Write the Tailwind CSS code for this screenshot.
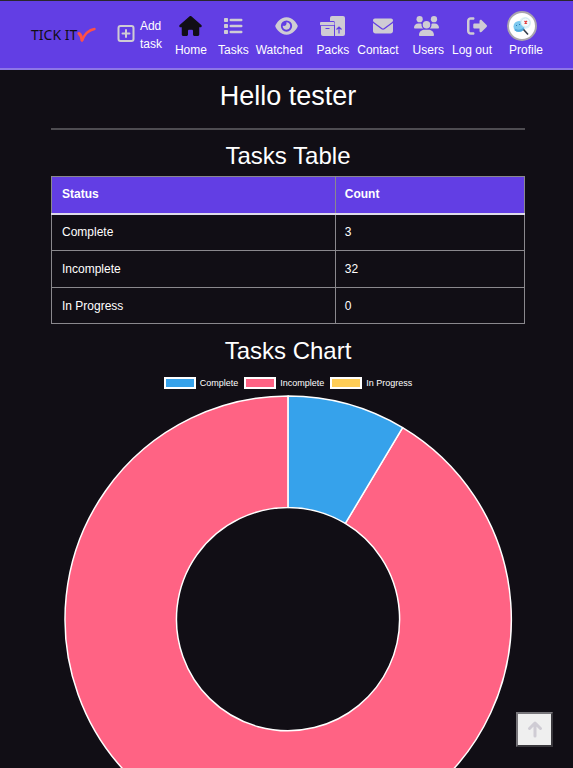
<!DOCTYPE html>
<html lang="en">
<head>
<meta charset="utf-8">
<meta name="viewport" content="width=device-width, initial-scale=1">
<title>Tick It</title>
<script src="https://cdn.jsdelivr.net/npm/@tailwindcss/browser@4"></script>
</head>
<body class="bg-[#110e15] font-['Liberation_Sans',Arial,sans-serif] text-xs text-white">
<header class="border-t border-[#29272c] bg-[#623ee4]">
  <nav class="flex h-[69px] items-center border-b-2 border-[#8d76e6] pt-px pr-[28px] pl-[31px]" aria-label="Main">
    <a href="#" class="flex items-center font-['Noto_Sans',sans-serif] text-[14px] leading-5 text-[#110e15]">TICK IT
      <svg class="h-4 w-5" viewBox="0 0 20 16" fill="none" stroke="#ff5146" stroke-linecap="round" stroke-linejoin="round" aria-hidden="true"><path d="M2 6.500Q4.500 8.500 5 13" stroke-width="3"/><path d="M5 13.500Q9 3.500 17.500 2" stroke-width="2.400"/></svg>
    </a>
    <a href="#" class="mr-[11px] ml-auto flex items-center gap-1">
      <svg class="size-5" viewBox="0 0 20 20" fill="none" stroke="#cfccd4" stroke-width="2" stroke-linecap="round" aria-hidden="true"><rect x="2.500" y="1" width="15" height="15" rx="2"/><path d="M10 5v7M6.500 8.500h7"/></svg>
      <span class="w-6 leading-[18px]">Add task</span>
    </a>
    <ul class="flex items-end leading-[18px] whitespace-nowrap">
      <li class="mr-[11px]"><a href="#" class="flex flex-col items-center gap-[5px]">
        <svg class="h-5 w-[23px]" viewBox="0 0 576 512" fill="#110e15" aria-hidden="true"><path d="M575.8 255.500c0 18-15 32.100-32 32.100h-32l.7 160.200c0 2.700-.2 5.400-.5 8.100V472c0 22.100-17.900 40-40 40H392c-22.100 0-40-17.900-40-40V384c0-17.700-14.300-32-32-32H256c-17.700 0-32 14.300-32 32v88c0 22.100-17.900 40-40 40H104c-22.100 0-40-17.900-40-40V287.600H32c-18 0-32-14-32-32.100c0-9 3-17 10-24L266.400 8c7-7 15-8 22-8s15 2 21 7L564.800 231.500c8 7 12 15 11 24z"/></svg>
        <span>Home</span></a></li>
      <li class="mr-[7px]"><a href="#" class="flex flex-col items-center gap-[5px]">
        <svg class="size-5" viewBox="0 0 20 20" fill="#cfccd4" aria-hidden="true"><rect x="1" y="2" width="4" height="4" rx=".8"/><rect x="1" y="8" width="4" height="4" rx=".8"/><rect x="1" y="14" width="4" height="4" rx=".8"/><rect x="6.500" y="2.800" width="13" height="2.400" rx="1.200"/><rect x="6.500" y="8.800" width="13" height="2.400" rx="1.200"/><rect x="6.500" y="14.800" width="13" height="2.400" rx="1.200"/></svg>
        <span>Tasks</span></a></li>
      <li class="mr-[14px]"><a href="#" class="flex flex-col items-center gap-[5px]">
        <svg class="ml-[15px] h-5 w-[23px]" viewBox="0 0 576 512" fill="#cfccd4" aria-hidden="true"><path d="M288 32c-80.800 0-145.500 36.800-192.600 80.600C48.600 156 17.300 208 2.500 243.700c-3.300 7.900-3.300 16.700 0 24.600C17.300 304 48.600 356 95.400 399.400C142.500 443.200 207.200 480 288 480s145.500-36.800 192.600-80.600c46.800-43.500 78.100-95.400 93-131.100c3.300-7.900 3.300-16.700 0-24.600c-14.900-35.700-46.200-87.700-93-131.100C433.500 68.800 368.800 32 288 32zM144 256a144 144 0 1 1 288 0 144 144 0 1 1 -288 0zm144-64c0 35.300-28.700 64-64 64c-7.100 0-13.900-1.200-20.300-3.300c-5.500-1.800-11.900 1.600-11.700 7.400c.3 6.900 1.300 13.800 3.200 20.700c13.700 51.200 66.400 81.600 117.600 67.900s81.600-66.400 67.900-117.600c-11.100-41.500-47.800-69.400-88.600-71.100c-5.800-.2-9.200 6.100-7.400 11.700c2.100 6.400 3.300 13.200 3.300 20.300z"/></svg>
        <span>Watched</span></a></li>
      <li class="mr-[8px]"><a href="#" class="flex flex-col items-center gap-[5px]">
        <svg class="h-5 w-[25px]" viewBox="0 0 25 20" aria-hidden="true"><path fill="#cfccd4" d="M12 0h11a2 2 0 0 1 2 2v16a2 2 0 0 1-2 2h-8V6.500a1.500 1.500 0 0 0-1.500-1.500H10V2a2 2 0 0 1 2-2zM1 6h12.500a1 1 0 0 1 1 1v1.500a.7.700 0 0 1-.7.700H.7a.7.700 0 0 1-.7-.7V7a1 1 0 0 1 1-1zM1 10h13v10H3a2 2 0 0 1-2-2z"/><path d="M5.500 12.500h4M19 17.500v-6M16.500 13.500 19 11l2.500 2.500" fill="none" stroke="#623ee4" stroke-width="1.200"/></svg>
        <span>Packs</span></a></li>
      <li class="mr-[14px]"><a href="#" class="flex flex-col items-center gap-[5px]">
        <svg class="ml-[11px] size-5" viewBox="0 0 512 512" fill="#cfccd4" aria-hidden="true"><path d="M48 64C21.500 64 0 85.500 0 112c0 15.100 7.100 29.300 19.200 38.400L236.800 313.600c11.400 8.500 27 8.500 38.400 0L492.800 150.400c12.100-9.100 19.200-23.300 19.200-38.400c0-26.500-21.500-48-48-48H48zM0 176V384c0 35.300 28.700 64 64 64H448c35.300 0 64-28.700 64-64V176L294.400 339.200c-22.800 17.100-54 17.100-76.800 0L0 176z"/></svg>
        <span>Contact</span></a></li>
      <li class="mr-[8px]"><a href="#" class="flex flex-col items-center gap-[5px]">
        <svg class="mr-[3px] h-5 w-[25px]" viewBox="0 0 640 512" fill="#cfccd4" aria-hidden="true"><circle cx="144" cy="80" r="80"/><circle cx="512" cy="80" r="80"/><path d="M0 298.700C0 239.800 47.800 192 106.700 192h42.700c15.900 0 31 3.500 44.600 9.700c-1.300 7.200-1.900 14.700-1.900 22.300c0 38.200 16.800 72.500 43.300 96H21.300C9.600 320 0 310.400 0 298.700zM405.300 320c26.600-23.500 43.300-57.800 43.300-96c0-7.600-.7-15-1.900-22.300c13.600-6.300 28.700-9.700 44.600-9.700h42.700C592.200 192 640 239.800 640 298.700c0 11.800-9.600 21.300-21.300 21.300z"/><path stroke="#623ee4" stroke-width="24" paint-order="stroke" d="M224 224a96 96 0 1 1 192 0a96 96 0 1 1-192 0zM128 485.300C128 411.700 187.700 352 261.300 352h117.400C452.300 352 512 411.700 512 485.300c0 14.700-11.900 26.700-26.700 26.700H154.700c-14.700 0-26.700-11.900-26.700-26.700z"/></svg>
        <span>Users</span></a></li>
      <li class="mr-[15px]"><a href="#" class="flex flex-col items-center gap-[5px]">
        <svg class="ml-[11px] size-5" viewBox="0 0 512 512" fill="#cfccd4" aria-hidden="true"><path d="M377.900 105.900L500.700 228.700c7.200 7.200 11.300 17.100 11.300 27.300s-4.100 20.100-11.300 27.300L377.900 406.100c-6.400 6.400-15 9.900-24 9.900c-18.700 0-33.900-15.200-33.900-33.900l0-62.100-128 0c-17.700 0-32-14.300-32-32l0-64c0-17.700 14.300-32 32-32l128 0 0-62.100c0-18.700 15.200-33.900 33.900-33.900c9 0 17.600 3.600 24 9.900zM160 96L96 96c-17.700 0-32 14.300-32 32l0 256c0 17.700 14.300 32 32 32l64 0c17.700 0 32 14.300 32 32s-14.300 32-32 32l-64 0c-53 0-96-43-96-96L0 128C0 75 43 32 96 32l64 0c17.700 0 32 14.300 32 32s-14.300 32-32 32z"/></svg>
        <span>Log out</span></a></li>
      <li><a href="#" class="flex flex-col items-center">
        <svg class="mr-2 size-[30px]" viewBox="0 0 30 30" aria-hidden="true"><circle cx="15" cy="15" r="14" fill="#fff" stroke="#aaa6ae" stroke-width="2"/><circle cx="18" cy="12" r="6" fill="#e1f2f8"/><circle cx="12" cy="15.500" r="5.500" fill="#7cc8ee"/><path d="M8 18.500q4 3 9-1" stroke="#4fa9dd" stroke-width="2" fill="none"/><path d="M9.500 14v1M12.500 13v1" stroke="#287fb9"/><circle cx="18.500" cy="11.500" r="4.500" fill="#eff8fb" stroke="#d0e8f0"/><path d="m16.500 18.500 4.500 5" stroke="#333c49" stroke-width="1.600"/><path d="m17.500 10 2.500 2.500m0-2.500-2.500 2.500" stroke="#e33b3b" stroke-width="1.300"/></svg>
        <span>Profile</span></a></li>
    </ul>
  </nav>
</header>
<main class="mx-[51px] mr-[48px] text-center">
  <h1 class="pt-2 text-[27px] leading-9">Hello tester</h1>
  <hr class="mt-[14px] border-t-2 border-[#4e4c51]">
  <h2 class="mt-3 text-2xl leading-7">Tasks Table</h2>
  <table class="mt-[6px] w-full table-fixed border-collapse text-left leading-[18px]">
    <thead class="bg-[#623ee4]"><tr class="h-[37px]">
      <th scope="col" class="w-3/5 border border-b-2 border-[#8a888d] border-b-[#dedbe9] px-[10px] pb-[2px]">Status</th>
      <th scope="col" class="border border-b-2 border-[#8a888d] border-b-[#dedbe9] px-[9px] pb-[2px]">Count</th></tr></thead>
    <tbody>
      <tr class="h-[37px]"><td class="border border-[#8a888d] px-[10px]">Complete</td><td class="border border-[#8a888d] px-[9px]">3</td></tr>
      <tr class="h-[37px]"><td class="border border-[#8a888d] px-[10px]">Incomplete</td><td class="border border-[#8a888d] px-[9px]">32</td></tr>
      <tr class="h-[36px]"><td class="border border-[#8a888d] px-[10px]">In Progress</td><td class="border border-[#8a888d] px-[9px]">0</td></tr>
    </tbody>
  </table>
  <h2 class="mt-[13px] text-2xl leading-7">Tasks Chart</h2>
  <ul class="mt-3 flex justify-center gap-[6px] text-[9px] leading-[12px]">
    <li class="flex items-center gap-1"><span class="h-3 w-8 border-2 border-white bg-[#36a2eb]"></span>Complete</li>
    <li class="flex items-center gap-1"><span class="h-3 w-8 border-2 border-white bg-[#ff6384]"></span>Incomplete</li>
    <li class="flex items-center gap-1"><span class="h-3 w-8 border-2 border-white bg-[#ffcd56]"></span>In Progress</li>
  </ul>
  <svg class="mx-auto mt-[6px] block w-[95%]" viewBox="-226 -225 452 452" role="img" aria-label="3 complete, 32 incomplete, 0 in progress" stroke="#fff" stroke-width="1.500" stroke-linejoin="round">
    <path fill="#ff6384" d="M114.900-192.300A224 224 0 1 1 0-224V-112A112 112 0 1 0 57.400-96.100Z"/>
    <path fill="#36a2eb" d="M0-224A224 224 0 0 1 114.900-192.300L57.400-96.100A112 112 0 0 0 0-112Z"/>
  </svg>
</main>
<button type="button" aria-label="Back to top" class="fixed right-5 bottom-[21px] flex h-[35px] w-[37px] items-center justify-center border-2 border-t-[#77757a] border-r-[#3a383d] border-b-[#3a383d] border-l-[#77757a] bg-[#efefef]">
  <svg class="h-5 w-4" viewBox="0 0 16 20" fill="none" stroke="#cfccd4" stroke-width="3" stroke-linecap="round" stroke-linejoin="round" aria-hidden="true"><path d="M8 16V3M2.500 8.500l5.500-5.500 5.500 5.500"/></svg>
</button>
</body>
</html>
